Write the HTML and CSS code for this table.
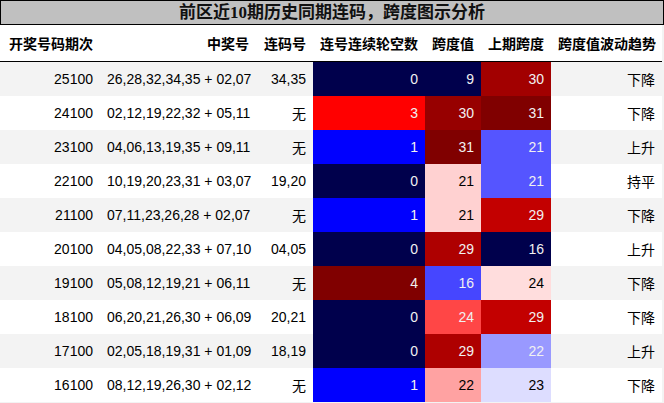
FILE: index.html
```html
<!DOCTYPE html>
<html lang="zh">
<head>
<meta charset="utf-8">
<title>前区近10期历史同期连码，跨度图示分析</title>
<link rel="stylesheet" href="styles.css">
</head>
<body>
<div class="panel">
  <div class="title">前区近10期历史同期连码，跨度图示分析</div>
  <table class="grid">
    <colgroup>
      <col class="c1"><col class="c2"><col class="c3"><col class="c4"><col class="c5"><col class="c6"><col class="c7">
    </colgroup>
    <thead>
      <tr>
        <th>开奖号码期次</th><th>中奖号</th><th>连码号</th><th>连号连续轮空数</th><th>跨度值</th><th>上期跨度</th><th>跨度值波动趋势</th>
      </tr>
    </thead>
    <tbody>
      <tr>
        <td>25100</td><td>26,28,32,34,35 + 02,07</td><td>34,35</td>
        <td class="lt" style="background:#00004c">0</td>
        <td class="lt" style="background:#00004c">9</td>
        <td class="lt" style="background:#a20000">30</td>
        <td>下降</td>
      </tr>
      <tr>
        <td>24100</td><td>02,12,19,22,32 + 05,11</td><td>无</td>
        <td class="lt" style="background:#ff0000">3</td>
        <td class="lt" style="background:#970000">30</td>
        <td class="lt" style="background:#800000">31</td>
        <td>下降</td>
      </tr>
      <tr>
        <td>23100</td><td>04,06,13,19,35 + 09,11</td><td>无</td>
        <td class="lt" style="background:#0000ff">1</td>
        <td class="lt" style="background:#800000">31</td>
        <td class="lt" style="background:#5555ff">21</td>
        <td>上升</td>
      </tr>
      <tr>
        <td>22100</td><td>10,19,20,23,31 + 03,07</td><td>19,20</td>
        <td class="lt" style="background:#00004c">0</td>
        <td class="dk" style="background:#ffd1d1">21</td>
        <td class="lt" style="background:#5555ff">21</td>
        <td>持平</td>
      </tr>
      <tr>
        <td>21100</td><td>07,11,23,26,28 + 02,07</td><td>无</td>
        <td class="lt" style="background:#0000ff">1</td>
        <td class="dk" style="background:#ffd1d1">21</td>
        <td class="lt" style="background:#c30000">29</td>
        <td>下降</td>
      </tr>
      <tr>
        <td>20100</td><td>04,05,08,22,33 + 07,10</td><td>04,05</td>
        <td class="lt" style="background:#00004c">0</td>
        <td class="lt" style="background:#ae0000">29</td>
        <td class="lt" style="background:#00004c">16</td>
        <td>上升</td>
      </tr>
      <tr>
        <td>19100</td><td>05,08,12,19,21 + 06,11</td><td>无</td>
        <td class="lt" style="background:#800000">4</td>
        <td class="lt" style="background:#4646ff">16</td>
        <td class="dk" style="background:#ffdddd">24</td>
        <td>下降</td>
      </tr>
      <tr>
        <td>18100</td><td>06,20,21,26,30 + 06,09</td><td>20,21</td>
        <td class="lt" style="background:#00004c">0</td>
        <td class="lt" style="background:#ff4646">24</td>
        <td class="lt" style="background:#c30000">29</td>
        <td>下降</td>
      </tr>
      <tr>
        <td>17100</td><td>02,05,18,19,31 + 01,09</td><td>18,19</td>
        <td class="lt" style="background:#00004c">0</td>
        <td class="lt" style="background:#ae0000">29</td>
        <td class="lt" style="background:#9999ff">22</td>
        <td>上升</td>
      </tr>
      <tr>
        <td>16100</td><td>08,12,19,26,30 + 02,12</td><td>无</td>
        <td class="lt" style="background:#0000ff">1</td>
        <td class="dk" style="background:#ffa2a2">22</td>
        <td class="dk" style="background:#ddddff">23</td>
        <td>下降</td>
      </tr>
    </tbody>
  </table>
</div>
</body>
</html>
```

FILE: styles.css
```css
html, body {
  margin: 0;
  padding: 0;
}
body {
  background: #f3f3f3;
  width: 664px;
  height: 403px;
  overflow: hidden;
}
.panel {
  width: 664px;
}
.title {
  box-sizing: border-box;
  height: 25px;
  background: #c0c0c0;
  border: 1px solid #000;
  text-align: center;
  font-family: "Liberation Serif", "Noto Sans CJK SC", serif;
  font-weight: bold;
  font-size: 17px;
  line-height: 23px;
  color: #111;
}
.grid {
  width: 662px;
  border-collapse: collapse;
  table-layout: fixed;
  font-family: "Liberation Sans", "Noto Sans CJK SC", sans-serif;
  font-size: 14px;
  color: #000;
}
.c1 { width: 100px; }
.c2 { width: 156px; }
.c3 { width: 57px; }
.c4 { width: 112px; }
.c5 { width: 56px; }
.c6 { width: 70px; }
.c7 { width: 111px; }
.grid th {
  height: 36px;
  padding: 0 7px;
  background: #fff;
  text-align: right;
  font-family: "Noto Sans CJK SC", sans-serif;
  font-weight: bold;
  font-size: 14px;
  white-space: nowrap;
  border-bottom: 1px solid #000;
}
.grid td {
  height: 34px;
  padding: 0 7px;
  text-align: right;
  white-space: nowrap;
  box-sizing: border-box;
}
.grid tbody tr:nth-child(odd) { background: #f3f3f3; }
.grid tbody tr:nth-child(even) { background: #fff; }
.grid td.lt { color: #f1f1f1; }
.grid td.dk { color: #000; }
```
